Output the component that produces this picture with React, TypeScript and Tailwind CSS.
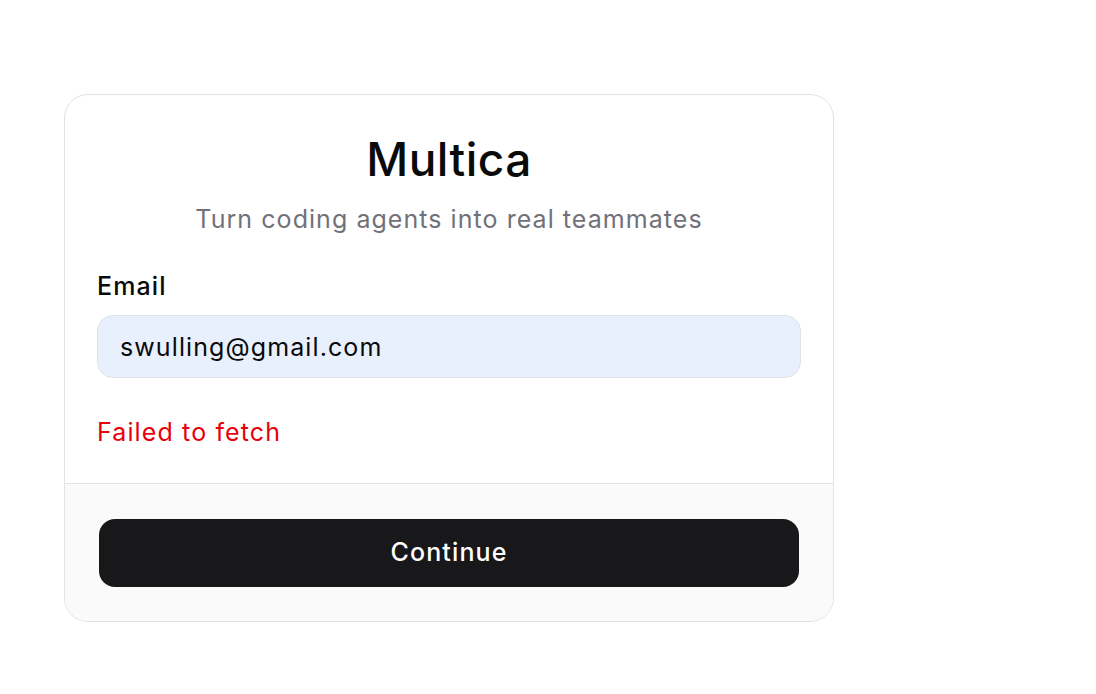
export default function App() {
  return (
    <div className="min-h-[694px] w-full bg-white" style={{ fontFamily: 'Inter, "Noto Sans", sans-serif' }}>
      <div className="pt-[94px] pl-[64px]">
        <div className="w-[770px] rounded-[24px] border border-[#e2e2e5] overflow-hidden bg-white">
          {/* Contenido */}
          <div className="px-[32px] pt-[36px] pb-[33px]">
            <h1 className="text-center text-[46px] leading-[56px] font-medium text-[#0a0a0a] tracking-[0.01em]">
              Multica
            </h1>
            <p className="mt-[14px] text-center text-[25px] leading-[36px] text-[#71717a] tracking-[0.042em]">
              Turn coding agents into real teammates
            </p>
            <label className="mt-[33px] block text-[25px] leading-[32px] font-medium text-[#0a0a0a] tracking-[0.045em]">
              Email
            </label>
            <input
              defaultValue="swulling@gmail.com"
              className="mt-[13px] block w-full h-[63px] rounded-[16px] border border-[#e0e2e8] bg-[#e8f0fe] px-[22px] text-[25px] text-[#0a0a0a] tracking-[0.044em] outline-none"
            />
            <p className="mt-[36px] text-[25px] leading-[36px] text-[#e7000b] tracking-[0.045em]">Failed to fetch</p>
          </div>

          {/* Pie */}
          <div className="border-t border-[#e2e2e5] bg-[#fafafa] px-[34px] pt-[35px] pb-[34px]">
            <button className="w-full h-[68px] rounded-[16px] bg-[#18181b] text-white text-[25px] font-medium tracking-[0.045em]">
              Continue
            </button>
          </div>
        </div>
      </div>
    </div>
  );
}
